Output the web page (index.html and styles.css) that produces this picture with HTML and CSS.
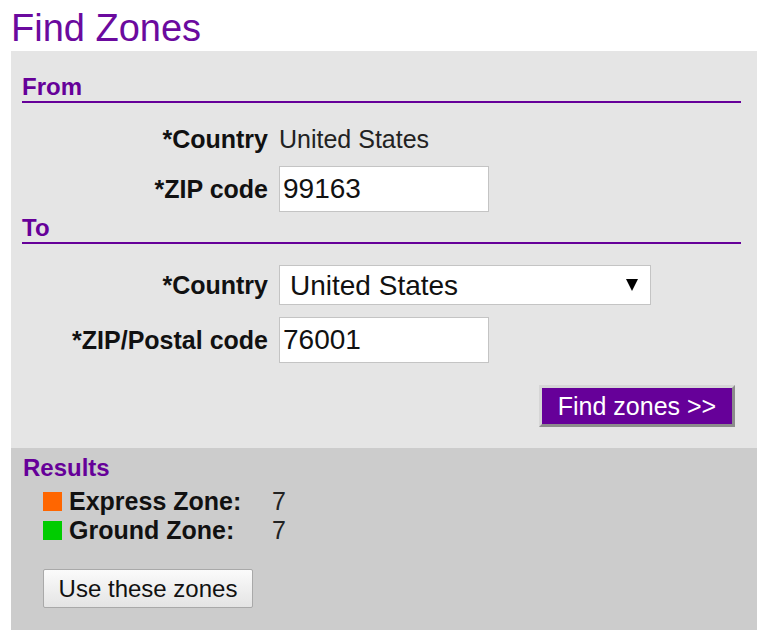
FILE: index.html
```html
<!DOCTYPE html>
<html>
<head>
  <link rel="stylesheet" href="styles.css">
</head>
<body>
  <h1 class="title">Find Zones</h1>

  <div class="panel">
    <h2 class="section-title">From</h2>
    <div class="field field-first">
      <span class="field-label">*Country</span>
      <span class="field-value">United States</span>
    </div>
    <div class="field">
      <label class="field-label" for="from-zip">*ZIP code</label>
      <input type="text" id="from-zip" class="text-input" value="99163">
    </div>

    <h2 class="section-title section-to">To</h2>
    <div class="field field-first">
      <label class="field-label" for="to-country">*Country</label>
      <div class="select-wrap">
        <select id="to-country" class="select-input">
          <option>United States</option>
          <option>Canada</option>
          <option>Mexico</option>
        </select>
      </div>
    </div>
    <div class="field">
      <label class="field-label" for="to-zip">*ZIP/Postal code</label>
      <input type="text" id="to-zip" class="text-input" value="76001">
    </div>

    <div class="actions">
      <button class="btn-find">Find zones &gt;&gt;</button>
    </div>
  </div>

  <div class="results">
    <h2 class="results-title">Results</h2>
    <div class="zone">
      <span class="zone-swatch swatch-express"></span>
      <span class="zone-label">Express Zone:</span>
      <span class="zone-value">7</span>
    </div>
    <div class="zone">
      <span class="zone-swatch swatch-ground"></span>
      <span class="zone-label">Ground Zone:</span>
      <span class="zone-value">7</span>
    </div>
    <button class="btn-use">Use these zones</button>
  </div>
</body>
</html>
```

FILE: styles.css
```css
body {
  margin: 0;
  padding: 5px 0 0 11px;
  font-family: "Liberation Sans", Arial, sans-serif;
  color: #111;
}

.title {
  margin: 0;
  font-size: 38px;
  font-weight: normal;
  line-height: 46px;
  color: #6b0a9e;
}

/* Panel abu-abu muda untuk form asal dan tujuan */
.panel {
  width: 746px;
  box-sizing: border-box;
  padding: 22px 16px 21px 11px;
  background-color: #e5e5e5;
}

.section-title {
  margin: 0;
  font-size: 24px;
  font-weight: bold;
  line-height: 28px;
  color: #660099;
  border-bottom: 2px solid #660099;
}

.section-to {
  margin-top: 2px;
}

.field {
  display: flex;
  align-items: center;
  margin-top: 12px;
}

.field-first {
  margin-top: 21px;
}

.field-label {
  width: 246px;
  margin-right: 11px;
  text-align: right;
  font-size: 25px;
  font-weight: bold;
  line-height: 30px;
}

.field-value {
  font-size: 25px;
  line-height: 30px;
  color: #222;
}

.text-input {
  box-sizing: border-box;
  width: 210px;
  height: 46px;
  padding: 0 3px;
  border: 1px solid #c4c4c4;
  background-color: #fff;
  font-family: "Liberation Sans", Arial, sans-serif;
  font-size: 28px;
  color: #111;
}

.select-wrap {
  position: relative;
}

/* Panah dropdown digambar dengan segitiga CSS */
.select-wrap::after {
  content: "";
  position: absolute;
  right: 13px;
  top: 14px;
  border-left: 6px solid transparent;
  border-right: 6px solid transparent;
  border-top: 12px solid #000;
  pointer-events: none;
}

.select-input {
  appearance: none;
  -webkit-appearance: none;
  box-sizing: border-box;
  width: 372px;
  height: 40px;
  padding: 0 10px;
  border: 1px solid #c4c4c4;
  border-radius: 0;
  background-color: #fff;
  font-family: "Liberation Sans", Arial, sans-serif;
  font-size: 28px;
  color: #111;
}

.actions {
  display: flex;
  justify-content: flex-end;
  margin-top: 22px;
  padding-right: 6px;
}

.btn-find {
  box-sizing: border-box;
  width: 196px;
  height: 42px;
  padding: 0;
  border: 3px solid;
  border-color: #d6d6d6 #8c8c8c #8c8c8c #d6d6d6;
  background-color: #660099;
  font-family: "Liberation Sans", Arial, sans-serif;
  font-size: 25px;
  color: #fff;
}

/* Panel hasil berwarna abu-abu lebih gelap */
.results {
  width: 746px;
  box-sizing: border-box;
  padding: 6px 11px 22px 12px;
  background-color: #cccccc;
}

.results-title {
  margin: 0;
  font-size: 24px;
  font-weight: bold;
  line-height: 28px;
  color: #660099;
}

.zone {
  display: flex;
  align-items: center;
  height: 29px;
  padding-left: 20px;
}

.zone:first-of-type {
  margin-top: 5px;
}

.zone-swatch {
  width: 19px;
  height: 19px;
  margin-right: 7px;
}

.swatch-express {
  background-color: #ff6600;
}

.swatch-ground {
  background-color: #00cc00;
}

.zone-label {
  width: 203px;
  font-size: 25px;
  font-weight: bold;
}

.zone-value {
  font-size: 25px;
  color: #222;
}

.btn-use {
  display: block;
  box-sizing: border-box;
  width: 210px;
  height: 39px;
  margin: 24px 0 0 20px;
  padding: 0;
  border: 1px solid #a9a9a9;
  border-radius: 2px;
  background: linear-gradient(#fbfbfb, #e4e4e4);
  font-family: "Liberation Sans", Arial, sans-serif;
  font-size: 24px;
  color: #111;
}
```
